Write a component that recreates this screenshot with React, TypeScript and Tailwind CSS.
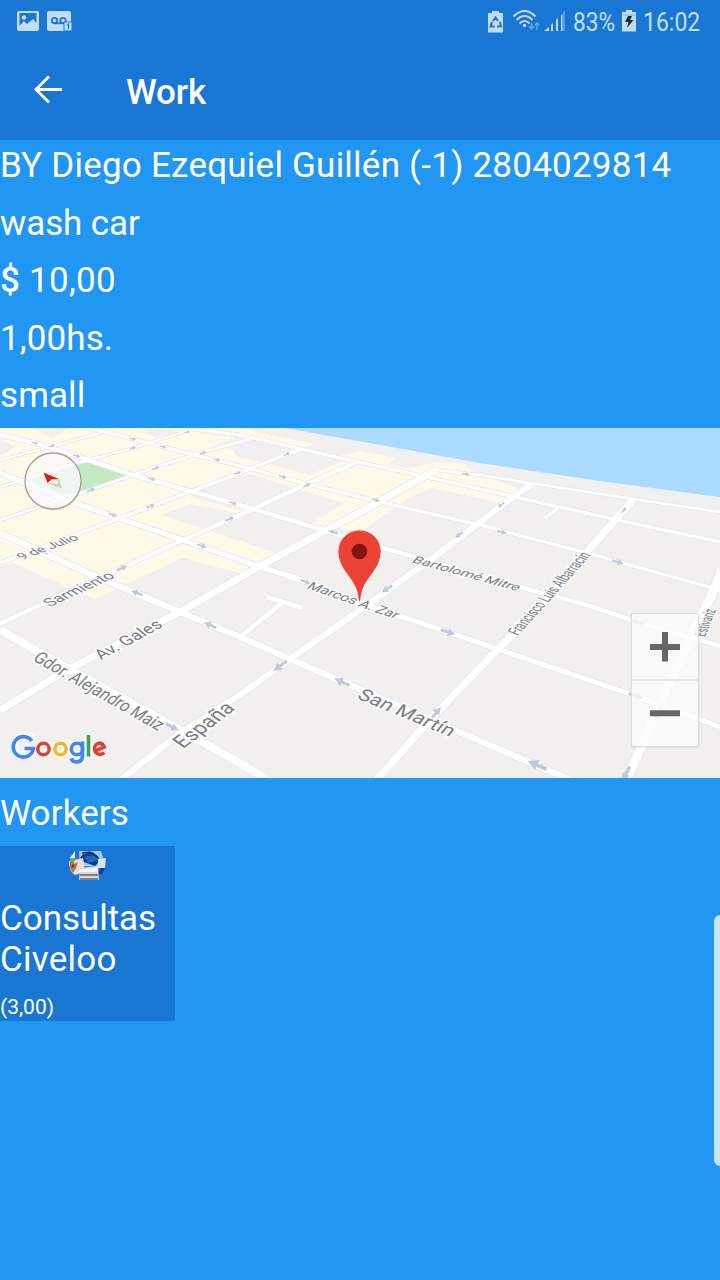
import React from "react";

const beige = [
  "M0 428H238L314 444L300 450L240 436L215 444L240 452L290 458L310 449L340 456L360 451L395 458L388 465L410 468L437 462L465 464L470 470L520 489L500 503L432 488L410 497L362 531L309 525L344 503L300 490L250 474L240 476L200 490L190 497L240 510L262 506L240 514L190 504L163 515L240 540L275 553L240 573L182 558L95 599L13 563L0 566Z",
];
const blocks = [
  "M163 515L190 504L242 519L275 532L240 541Z",
  "M228 487L250 479L344 503L308 522L262 508Z",
  "M262 462L300 451L342 461L310 475Z",
  "M233 451L248 445L290 455L268 463L240 458Z",
  "M0 438L16 447L0 456Z",
  "M32 428H70L52 438Z",
  "M139 432L160 428L180 432L157 437Z",
];
const roads: [string, number][] = [
  ["M0 460L50 447L107 431", 2],
  ["M0 487L70 465L133 448L190 430", 2],
  ["M0 520L90 490L150 469L200 453L250 439", 2.5],
  ["M90 428L133 439L163 447L240 466L307 484L380 502L480 525L587 553L720 590", 3],
  ["M0 563L120 518L200 488L240 473L287 454L303 449", 3.2],
  ["M0 624L57 597L183 540L240 515L307 484L357 462", 4],
  ["M0 435L35 443L77 456L133 475L240 505L333 533L383 548L523 588L587 605L637 622L720 646", 4],
  ["M0 473L72 502L118 518L183 540L240 560L307 582L373 607L480 643L627 693L720 727", 5],
  ["M185 428L240 435L340 458L427 477L480 489L617 520L720 542", 3.2],
  ["M437 470L480 475L530 483L633 499L720 512", 2.5],
  ["M0 533L97 577L180 612L240 637L290 659L350 685L480 741L573 781", 6.2],
  ["M0 630L67 668L177 728L240 763L270 781", 8],
  ["M0 710L67 670L180 612L260 566L323 532L377 503L423 477L437 470", 7],
  ["M118 782L180 733L240 695L290 659L370 603L430 560L480 522L513 497L532 484", 6],
  ["M373 784L427 723L497 650L547 600L587 552L615 520L633 500", 7.5],
  ["M625 784L657 710L693 633L713 592L722 570", 9],
  ["M267 597L302 608M282 603L240 637", 4.5],
  ["M545 518L558 508", 3],
];
const arrows: [number, number, number, number][] = [
  [35, 443, 16, 0.5], [52, 446, -16, 0.5], [77, 456, 18, 0.55], [133, 439, 14, 0.5], [133, 448, -17, 0.5],
  [163, 447, 14, 0.5], [187, 432, -17, 0.4], [203, 453, -17, 0.55], [217, 460, 14, 0.5], [156, 468, -18, 0.55],
  [91, 490, -18, 0.65], [152, 479, 18, 0.6], [151, 506, -20, 0.65], [113, 515, 18, 0.65], [43, 552, 205, 0.7],
  [233, 503, 16, 0.65], [230, 519, -22, 0.7], [202, 546, 18, 0.75], [122, 568, -24, 0.85], [137, 593, 202, 0.9],
  [238, 473, -20, 0.55], [287, 454, -22, 0.5], [283, 477, 13, 0.6], [307, 485, -24, 0.6], [376, 500, 14, 0.65], [333, 532, 196, 0.75],
  [306, 582, 20, 0.8], [387, 589, 145, 0.9], [459, 535, 142, 0.7], [501, 505, 145, 0.6], [466, 474, 8, 0.55],
  [502, 532, 14, 0.7], [618, 562, 15, 0.85], [624, 510, -45, 0.55], [210, 625, 204, 1], [172, 727, 28, 1.1],
  [448, 632, 18, 1.1], [280, 666, 143, 1.2], [342, 682, 204, 1.2], [436, 713, -50, 1.1], [637, 622, 196, 0.95],
  [636, 696, 18, 1.1], [537, 765, 203, 1.5], [626, 774, 116, 1.2], [658, 714, 116, 1],
];

// Each street name runs from a to b on the screen; tilt is the vertical foreshortening there.
type Label = { t: string; a: [number, number]; b: [number, number]; tilt: number; size: number };
const labels: Label[] = [
  { t: "9 de Julio", a: [22, 560], b: [80, 539], tilt: 0.52, size: 17 },
  { t: "Sarmiento", a: [50, 607], b: [116, 577], tilt: 0.56, size: 20 },
  { t: "Av. Gales", a: [101, 660], b: [164, 626], tilt: 0.68, size: 20 },
  { t: "España", a: [183, 749], b: [236, 709], tilt: 0.72, size: 24 },
  { t: "Gdor. Alejandro Maiz", a: [32, 660], b: [158, 731], tilt: 0.78, size: 21 },
  { t: "Marcos A. Zar", a: [306, 588], b: [395, 619], tilt: 0.6, size: 18 },
  { t: "Bartolomé Mitre", a: [411, 562], b: [517, 591], tilt: 0.54, size: 18 },
  { t: "Francisco Luis Albarracín", a: [518, 636], b: [591, 555], tilt: 0.66, size: 18 },
  { t: "San Martín", a: [356, 698], b: [450, 737], tilt: 0.72, size: 23 },
  { t: "Estivariz", a: [705, 637], b: [716, 610], tilt: 0.6, size: 16 },
];

function StreetName({ t, a, b, tilt, size }: Label) {
  const dx = b[0] - a[0];
  const dy = (b[1] - a[1]) / tilt;
  const angle = (Math.atan2(dy, dx) * 180) / Math.PI;
  return (
    <text transform={`translate(${a[0]} ${a[1]}) scale(1 ${tilt}) rotate(${angle})`} fontSize={size} textLength={Math.hypot(dx, dy)} lengthAdjust="spacingAndGlyphs" fill="#7a7e82" stroke="#fafafa" strokeWidth="4" strokeLinejoin="round" paintOrder="stroke">{t}</text>
  );
}

function CityMap() {
  return (
    <svg className="block h-[350px] w-full" viewBox="0 428 720 350" fontFamily="Roboto, sans-serif">
      <rect y="428" width="720" height="350" fill="#f1f0ef" />
      <path d="M285 428L375 444L480 463L600 481L720 497V428Z" fill="#aadaff" />
      {beige.map((d) => <path key={d} d={d} fill="#fff9e8" />)}
      {blocks.map((d) => <path key={d} d={d} fill="#f1f0ef" />)}
      <path d="M27 479L90 461L133 475L71 498Z" fill="#c5e8c5" />
      <g fill="none" strokeLinejoin="round">
        {roads.map(([d, w]) => <path key={d} d={d} stroke="#e5e7ec" strokeWidth={w + 1.6} />)}
        {roads.map(([d, w]) => <path key={d} d={d} stroke="#ffffff" strokeWidth={w} />)}
      </g>
      {arrows.map(([x, y, r, s]) => (
        <path key={`${x}-${y}`} d="M-7-1.5H0V-4L7 0L0 4V1.5H-7Z" fill="#c4c9da" transform={`translate(${x} ${y}) rotate(${r}) scale(${s} ${s * 0.9})`} />
      ))}
      {labels.map((l) => <StreetName key={l.t} {...l} />)}
      <path d="M359.500 601.500C358 601.500 358.300 596 357 591.500C353 577 338 569 338 551.500A21.500 21.500 0 0 1 381 551.500C381 569 366 577 362 591.500C360.700 596 361 601.500 359.500 601.500Z" fill="#ea4335" stroke="#fff" strokeWidth=".6" />
      <circle cx="359.500" cy="551.500" r="7.800" fill="#811411" />
      <circle cx="53" cy="482" r="28.500" fill="#000" opacity=".08" />
      <circle cx="53" cy="481" r="28" fill="#fff" fillOpacity=".78" stroke="#a3a19c" strokeWidth="1.300" />
      <path d="M43.500 472.500L59 479L52 479.500L47.500 483Z" fill="#dc2018" />
      <path d="M59 479L62 488.500L47.500 483L52 479.500Z" fill="#cbcbc8" />
      <path d="M52 479.500L58 481L58 484L48 483Z" fill="#f6f6f4" />
      <rect x="630.500" y="613" width="69" height="135" rx="3" fill="#000" opacity=".07" />
      <rect x="631.500" y="613.500" width="67" height="133" rx="2" fill="#fff" fillOpacity=".8" stroke="#dcdcdc" />
      <path d="M632 680H698" stroke="#e0e0e0" strokeWidth="1.500" />
      <path d="M650 647H680M665 632V661.500M650 713.300H680" stroke="#666" strokeWidth="6" />
      <g fill="none" stroke="#fafafa" strokeWidth="7">
        <path d="M32.500 739A10 10 0 1 0 34 748H24M88.500 735V756" />
        <circle cx="43.500" cy="749" r="5.700" /><circle cx="60.500" cy="749" r="5.700" /><circle cx="77" cy="749" r="5.700" /><circle cx="99" cy="749" r="5.700" />
      </g>
      <g fill="none" strokeWidth="3.600">
        <path d="M31.800 741A10.200 10.200 0 1 0 33.500 748.500H24.500" stroke="#4285f4" />
        <circle cx="43.500" cy="749" r="5.700" stroke="#db4437" />
        <circle cx="60.500" cy="749" r="5.700" stroke="#f4b824" />
        <circle cx="77" cy="749" r="5.700" stroke="#4285f4" />
        <path d="M82.500 741.500V756Q82 762 76.500 762Q72.500 762 71 758.500" stroke="#4285f4" />
        <path d="M88.500 735V756.500" stroke="#34a853" />
        <path d="M94 751.500L104.300 747Q102.500 742.800 98.500 743.200A5.700 5.700 0 1 0 104.300 752.500" stroke="#db4437" />
      </g>
    </svg>
  );
}

function StatusBar() {
  return (
    <div className="flex h-11 items-center pl-[17px] text-[26px] text-[#c4e0f8]">
      <svg className="h-6 w-14" viewBox="17 10 56 24" fill="#c2dcf5">
        <path fillRule="evenodd" d="M19 11H37Q39 11 39 13V29Q39 31 37 31H19Q17 31 17 29V13Q17 11 19 11ZM19.500 13V26L24 21L27 24L33 19L36.500 23V13Z" />
        <circle cx="24" cy="17.500" r="2.300" />
        <path d="M49 11H69Q71 11 71 13V31H49Q47 31 47 29V13Q47 11 49 11Z" />
        <g fill="none" stroke="#1976d2" strokeWidth="1.800"><circle cx="54.500" cy="20.500" r="2.700" /><circle cx="63" cy="20.500" r="2.700" /><path d="M54 23.300H64" /></g>
        <path d="M64 22H72V31H64Z" stroke="#1976d2" strokeWidth="1" />
        <path d="M67 25L68.500 24V29" fill="none" stroke="#1976d2" strokeWidth="1.200" />
      </svg>
      <svg className="ml-[414px] h-6 w-[80px]" viewBox="487 10 80 24">
        <path d="M488 13H492V11H499V13H503V32.500H488Z" fill="#c2dcf5" />
        <g fill="none" stroke="#1976d2" strokeWidth="2"><path d="M493 21L495.500 17.500L498 21M500 22L501 26.500H497M494.500 26.500H490.500L492 22" /></g>
        <g fill="none" stroke="#c2dcf5" strokeWidth="2"><path d="M513.500 16.500Q524.500 5.500 535.500 16.500M516.500 20Q524.500 12 532.500 20M519.500 23.500Q524.500 18.500 529.500 23.500" /></g>
        <circle cx="524.500" cy="25.500" r="1.700" fill="#c2dcf5" />
        <path d="M531.500 23V29M529 26.500L531.500 29L534 26.500M537 30V23M534.500 25.500L537 23L539.500 25.500" fill="none" stroke="#62a3e2" strokeWidth="1.600" />
        <path d="M544 31L549 27V31ZM551 25L553 23V31H551ZM556 20L558 18V31H556ZM561 16L562.500 14V31H561Z" fill="#c2dcf5" />
        <path d="M563 13L565 10V31H563Z" fill="#549be0" />
      </svg>
      <div className="ml-[6px] w-[48px]"><span className="inline-block origin-left scale-x-[.87]">83%</span></div>
      <svg className="h-6 w-4" viewBox="621 10 16 24">
        <path d="M622 12H626V10H632V12H636V31.500H622Z" fill="#c2dcf5" />
        <path d="M623 15H635" stroke="#73afe5" />
        <path d="M628 16H632L630 20H633.500L627 28L628.500 22H625Z" fill="#142b42" />
      </svg>
      <div className="ml-[6px]"><span className="inline-block origin-left scale-x-[.885]">16:02</span></div>
    </div>
  );
}

function Avatar() {
  return (
    <svg className="mx-auto block h-[42px] w-[40px]" viewBox="68 846 40 42">
      <path d="M70 858L75 851V858Z" fill="#fff" />
      <path d="M79 851H101L103 857L101 867L80 866Z" fill="#a6c7ec" />
      <path d="M83 854L93 852L101 860L95 866L84 862L80 858Z" fill="#0b3d91" />
      <path d="M84 857L94 855L99 860L89 863Z" fill="#1c6bc0" />
      <path d="M82 853L91 852M88 852L98 857" stroke="#142f67" strokeWidth="1.500" />
      <path d="M98 859L106 858L105 868H98Z" fill="#d8e3f0" />
      <path d="M101 868H105L102 874H98Z" fill="#0a438d" />
      <path d="M69 861L83 858L85 872L75 875Q69 872 69 861Z" fill="#e6dfd2" />
      <path d="M70 862L74 860L74 864L78 862L76 868L73 873L70 868Z" fill="#bd7134" />
      <path d="M70 858H75V861L70 862Z" fill="#45b98d" />
      <circle cx="73" cy="866" r="1.400" fill="#2b4678" />
      <path d="M80 868L98 866L99 880H79Z" fill="#d6d8dc" />
      <path d="M79 870L98 867V872H79Z" fill="#f5f5f5" />
      <path d="M80 875H98M80 879H98" stroke="#60656c" strokeWidth="1.500" />
    </svg>
  );
}

export default function App() {
  return (
    <main className="flex h-[1280px] w-[720px] flex-col overflow-hidden bg-[#2196f3] text-white [font-family:Roboto,sans-serif]">
      <header className="h-[140px] shrink-0 bg-[#1976d2]">
        <StatusBar />
        <div className="flex h-24 items-center pl-8">
          <svg className="-mt-1.5 h-8 w-8" viewBox="32 73 32 32" fill="none" stroke="#fff" strokeWidth="2.800">
            <path d="M62 89.500H36M49 76.500L36 89.500L49 102.500" />
          </svg>
          <h1 className="ml-[62px] pt-0.5 text-[35px] font-medium tracking-[-.2px]">Work</h1>
        </div>
      </header>
      <section className="flex h-72 shrink-0 flex-col pt-px text-[35px] leading-[50px]">
        <p className="h-[57.5px] tracking-[.23px] whitespace-nowrap">BY Diego Ezequiel Guillén (-1) 2804029814</p>
        <p className="h-[57.5px] tracking-[-.1px]">wash car</p>
        <p className="h-[57.5px] tracking-[.25px]"><span className="font-medium">$</span> 10,00</p>
        <p className="h-[57.5px] tracking-[.1px]">1,00hs.</p>
        <p className="h-[57px] tracking-[.1px]">small</p>
      </section>
      <CityMap />
      <div className="flex flex-1 justify-between">
        <section>
          <h2 className="h-[68px] pt-[15px] text-[35px] leading-[41px] tracking-[.1px]">Workers</h2>
          <article className="h-[175px] w-[175px] bg-[#1976d2]">
            <Avatar />
            <h3 className="mt-[10px] text-[35px] leading-[41px] tracking-[-.05px]">Consultas <span className="tracking-[.25px]">Civeloo</span></h3>
            <p className="mt-[15px] text-[21px] leading-[25px]">(3,00)</p>
          </article>
        </section>
        <div className="mt-[137px] h-[251px] w-[6px] rounded-l-md bg-[#c5e3fb]" />
      </div>
    </main>
  );
}
